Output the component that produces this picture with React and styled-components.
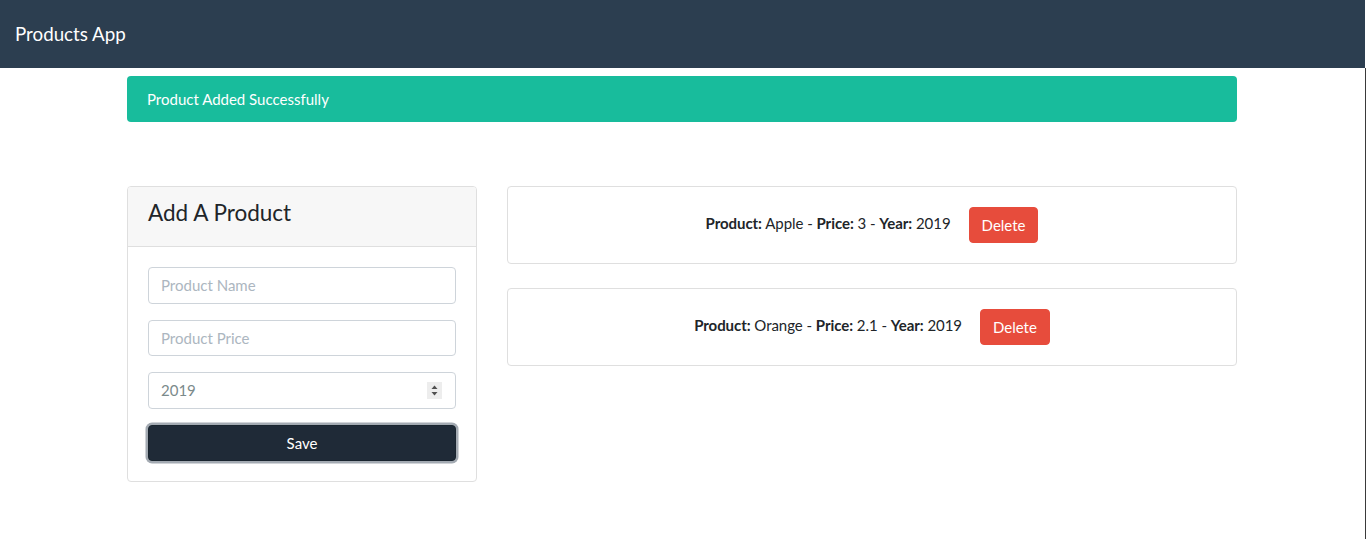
import React from 'react';
import styled, { createGlobalStyle } from 'styled-components';

const GlobalStyle = createGlobalStyle`
  html, body {
    margin: 0;
    padding: 0;
    background: #fff;
  }
  body {
    font-family: Lato, "Liberation Sans", sans-serif;
    font-size: 15px;
    line-height: 1.5;
    color: #212529;
  }
  *, *::before, *::after { box-sizing: border-box; }
`

const Page = styled.div`
  width: 1366px;
  display: flex;
  flex-direction: column;
`

const Navbar = styled.nav`
  width: 1365px;
  height: 68px;
  background-color: #2c3e50;
  display: flex;
  align-items: center;
  padding: 0 15px;
`

const Brand = styled.a`
  color: #fff;
  font-size: 18.75px;
  line-height: 1.5;
  text-decoration: none;
`

const Main = styled.main`
  border-right: 1px solid #3a3a3a;
  padding-right: 1px;
  min-height: 471px;
`

const Container = styled.div`
  width: 1110px;
  margin: 0 auto;
`

const Alert = styled.div`
  margin-top: 8px;
  padding: 12px 20px;
  line-height: 22px;
  border-radius: 4px;
  background-color: #18bc9c;
  color: #fff;
`

const Row = styled.div`
  margin-top: 64px;
  display: grid;
  grid-template-columns: 350px 730px;
  column-gap: 30px;
  align-items: start;
`

const Card = styled.div`
  border: 1px solid #dfdfdf;
  border-radius: 4px;
  background: #fff;
  margin-bottom: ${props => props.spaced ? '24px' : '0'};
`

const CardHeader = styled.div`
  padding: 12px 20px;
  background-color: #f7f7f7;
  border-bottom: 1px solid #dfdfdf;
  border-radius: 3px 3px 0 0;

  h4 {
    margin: 0 0 8px;
    font-size: 22.5px;
    font-weight: 400;
    line-height: 27px;
    color: #212529;
  }
`

const CardBody = styled.div`
  padding: 20px;
`

const FormGroup = styled.div`
  margin-bottom: 16px;
`

const Input = styled.input`
  display: block;
  width: 100%;
  height: 36.5px;
  padding: 6px 12px;
  font-family: inherit;
  font-size: 15px;
  line-height: 1.5;
  color: #7b8a8b;
  border: 1px solid #ced4da;
  border-radius: 4px;
  background: #fff;
  outline: none;

  &::placeholder {
    color: #acb6c0;
  }
`

const NumberBox = styled.div`
  display: flex;
  align-items: center;
  height: 36.5px;
  padding: 0 13px 0 12px;
  border: 1px solid #ced4da;
  border-radius: 4px;
  background: #fff;
`

const NumberInput = styled.input`
  flex: 1;
  min-width: 0;
  border: none;
  outline: none;
  padding: 0;
  font-family: inherit;
  font-size: 15px;
  line-height: 1.5;
  color: #7b8a8b;
  background: transparent;
`

const Spinner = styled.span`
  display: flex;
  width: 15px;
  height: 17px;
  background: #ededed;
`

const SaveButton = styled.button`
  display: block;
  width: 100%;
  height: 36.5px;
  padding: 6px 12px;
  font-family: inherit;
  font-size: 15px;
  line-height: 1.5;
  color: #fff;
  background-color: #1f2a37;
  border: 1px solid #1a252f;
  border-radius: 4px;
  box-shadow: 0 0 0 2.5px #a3aab2;
  cursor: pointer;
`

const ProductLine = styled.div`
  display: flex;
  justify-content: center;
  align-items: center;
  gap: 18px;
`

const ProductText = styled.span`
  margin-bottom: 3px;
  letter-spacing: -0.05px;

  strong { font-weight: 700; }
`

const DeleteButton = styled.button`
  height: 36px;
  padding: 6px 12px;
  font-family: inherit;
  font-size: 15px;
  line-height: 22px;
  color: #fff;
  background-color: #e74c3c;
  border: 1px solid #e74c3c;
  border-radius: 4px;
  cursor: pointer;
`

const products = [
  { name: 'Apple', price: '3', year: 2019 },
  { name: 'Orange', price: '2.1', year: 2019 },
];

const SpinIcon = () => (
  <Spinner>
    <svg width="15" height="17" viewBox="0 0 15 17">
      <path d="M4.5 7 L7.5 3.5 L10.5 7 Z" fill="#505050" />
      <path d="M4.5 10 L7.5 13.5 L10.5 10 Z" fill="#505050" />
    </svg>
  </Spinner>
);

export default function App() {
  return (
    <Page>
      <GlobalStyle />
      <Navbar>
        <Brand href="#">Products App</Brand>
      </Navbar>
      <Main>
        <Container>
          <Alert>Product Added Successfully</Alert>
          <Row>
            <Card>
              <CardHeader>
                <h4>Add A Product</h4>
              </CardHeader>
              <CardBody>
                <FormGroup>
                  <Input type="text" placeholder="Product Name" />
                </FormGroup>
                <FormGroup>
                  <Input type="text" placeholder="Product Price" />
                </FormGroup>
                <FormGroup>
                  <NumberBox>
                    <NumberInput type="text" defaultValue="2019" />
                    <SpinIcon />
                  </NumberBox>
                </FormGroup>
                <SaveButton>Save</SaveButton>
              </CardBody>
            </Card>
            <div>
              {products.map((p, i) => (
                <Card key={p.name} spaced={i < products.length - 1}>
                  <CardBody>
                    <ProductLine>
                      <ProductText>
                        <strong>Product:</strong> {p.name} - <strong>Price:</strong> {p.price} - <strong>Year:</strong> {p.year}
                      </ProductText>
                      <DeleteButton>Delete</DeleteButton>
                    </ProductLine>
                  </CardBody>
                </Card>
              ))}
            </div>
          </Row>
        </Container>
      </Main>
    </Page>
  );
}
